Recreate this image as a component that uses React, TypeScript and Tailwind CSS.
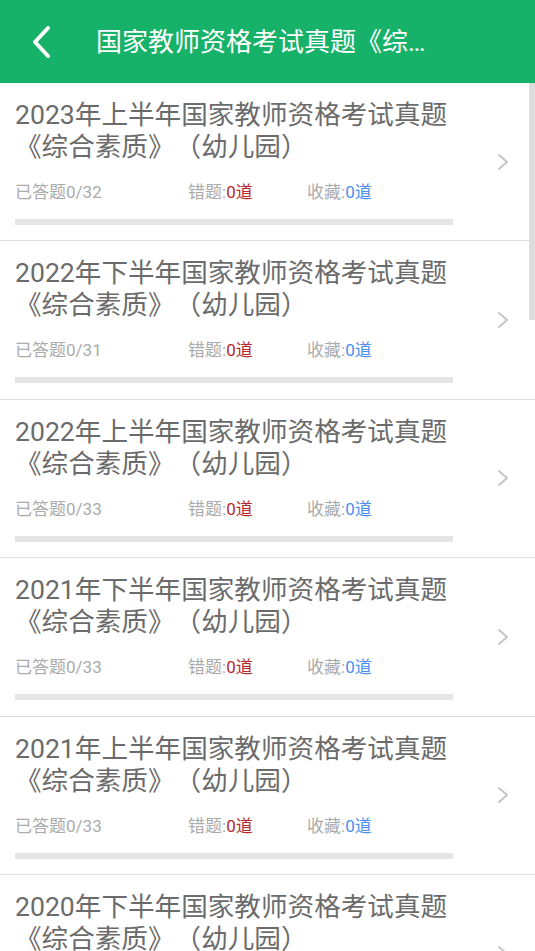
import React from 'react';

const papers = [
  { title: '2023年上半年国家教师资格考试真题《综合素质》（幼儿园）', total: 32 },
  { title: '2022年下半年国家教师资格考试真题《综合素质》（幼儿园）', total: 31 },
  { title: '2022年上半年国家教师资格考试真题《综合素质》（幼儿园）', total: 33 },
  { title: '2021年下半年国家教师资格考试真题《综合素质》（幼儿园）', total: 33 },
  { title: '2021年上半年国家教师资格考试真题《综合素质》（幼儿园）', total: 33 },
  { title: '2020年下半年国家教师资格考试真题《综合素质》（幼儿园）', total: 33 },
];

const font = { fontFamily: 'Roboto, "Noto Sans CJK SC", sans-serif' };

const App: React.FC = () => (
  <div className="relative w-[535px] h-[951px] overflow-hidden bg-white [text-spacing-trim:space-all]" style={font}>
    <header className="h-[83px] bg-[#17b26a] flex items-center">
      <button className="w-[96px] h-full flex items-center pl-[30px]">
        <svg width="22" height="34" viewBox="0 0 22 34" fill="none">
          <path d="M18 3 L5 17 L18 31" stroke="white" strokeWidth="4" strokeLinecap="round" strokeLinejoin="round" />
        </svg>
      </button>
      <h1 className="text-white text-[26px] leading-none truncate max-w-[348px]">
        国家教师资格考试真题《综合素质》（幼儿园）
      </h1>
    </header>

    <ul>
      {papers.map((p) => (
        <li key={p.title} className="h-[158.4px] border-b-[1.5px] border-[#dedede] flex items-center">
          <div className="flex-1 pl-[15px] pt-[16px] self-start">
            <p className="text-[26.6px] leading-[32px] text-[#6b6b6b] w-[455px]">{p.title}</p>
            <div className="mt-[17px] flex text-[17px] leading-[24px] text-[#ababab]">
              <span className="w-[173px]">已答题0/{p.total}</span>
              <span className="w-[119px]">
                错题:<span className="text-[#b8282a]">0道</span>
              </span>
              <span>
                收藏:<span className="text-[#4a8ff0]">0道</span>
              </span>
            </div>
            <div className="mt-[15px] h-[6px] w-[438px] bg-[#e5e5e5]" />
          </div>
          <svg className="mr-[26px]" width="12" height="18" viewBox="0 0 12 18" fill="none">
            <path d="M2 2 L10 9 L2 16" stroke="#c2c2c2" strokeWidth="1.8" strokeLinecap="round" strokeLinejoin="round" />
          </svg>
        </li>
      ))}
    </ul>

    <div className="absolute right-0 top-[83px] w-[6px] h-[237px] bg-[#dddddd]" />
  </div>
);

export default App;
